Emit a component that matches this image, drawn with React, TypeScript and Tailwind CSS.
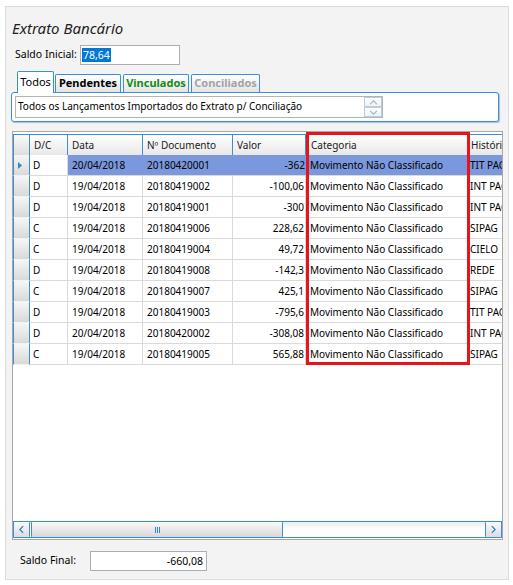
const rows = [
  ['D', '20/04/2018', '20180420001', '-362', 'TIT PAGO'],
  ['D', '19/04/2018', '20180419002', '-100,06', 'INT PAG'],
  ['D', '19/04/2018', '20180419001', '-300', 'INT PAG'],
  ['C', '19/04/2018', '20180419006', '228,62', 'SIPAG'],
  ['C', '19/04/2018', '20180419004', '49,72', 'CIELO'],
  ['D', '19/04/2018', '20180419008', '-142,3', 'REDE'],
  ['C', '19/04/2018', '20180419007', '425,1', 'SIPAG'],
  ['D', '19/04/2018', '20180419003', '-795,6', 'TIT PAGO'],
  ['D', '20/04/2018', '20180420002', '-308,08', 'INT PAG'],
  ['C', '19/04/2018', '20180419005', '565,88', 'SIPAG'],
]

function Chevron({ dir, className }: { dir: 'up' | 'down' | 'left' | 'right'; className?: string }) {
  const pts = {
    up: '1,5 5,1 9,5',
    down: '1,1 5,5 9,1',
    left: '5,1 1,5 5,9',
    right: '1,1 5,5 1,9',
  }[dir]
  const box = dir === 'up' || dir === 'down' ? '0 0 10 6' : '0 0 6 10'
  return (
    <svg viewBox={box} className={className} fill="none" stroke="currentColor" strokeWidth="1.4">
      <polyline points={pts} />
    </svg>
  )
}

export default function App() {
  return (
    <div className="relative w-[513px] h-[585px] bg-white pt-[6px] pl-[5px] font-['Noto_Sans',sans-serif] text-[10px] text-black">
      <div className="w-[504px] h-[574px] border border-[#dcdcdc] bg-[#f3f3f3] flex flex-col">
        <div className="ml-[6px] mt-[10px] h-[22px] leading-[22px] text-[15px] italic text-[#1e1e1e]">
          Extrato Bancário
        </div>

        <div className="mt-[6px] ml-[9px] flex items-center h-[20px] text-[10.5px]">
          <span className="w-[65px]">Saldo Inicial:</span>
          <div className="w-[100px] h-[20px] border border-[#abadb3] bg-white flex items-center pl-[1px]">
            <span className="bg-[#0078d7] text-white px-[1px] leading-[14px]">78,64</span>
          </div>
        </div>

        {/* tabs */}
        <div className="mt-[6px] ml-[11px] h-[22px] flex items-end relative z-10 text-[11px]">
          <div className="w-[37px] h-[22px] border border-b-0 border-[#3c8fd6] rounded-t-[2px] bg-white flex items-center justify-center pb-[1px]">
            Todos
          </div>
          <div className="ml-[1px] w-[66px] h-[18px] mb-[1px] border border-b-0 border-[#3c8fd6] rounded-t-[2px] bg-linear-to-b from-white to-[#e4e4e4] flex items-center justify-center font-bold">
            Pendentes
          </div>
          <div className="ml-[2px] w-[66px] h-[18px] mb-[1px] border border-b-0 border-[#3c8fd6] rounded-t-[2px] bg-linear-to-b from-white to-[#e4e4e4] flex items-center justify-center font-bold text-[#168a16]">
            Vinculados
          </div>
          <div className="ml-[2px] w-[69px] h-[18px] mb-[1px] border border-b-0 border-[#3c8fd6] rounded-t-[2px] bg-linear-to-b from-white to-[#e4e4e4] flex items-center justify-center font-bold text-[#a3a3a3]">
            Conciliados
          </div>
        </div>
        <div className="-mt-[1px] ml-[5px] w-[488px] h-[30px] border border-[#3c8fd6] rounded-[3px] bg-white shadow-[1px_1px_1px_rgba(30,90,150,0.35)]">
          <div className="mt-[3px] ml-[3px] w-[368px] h-[22px] border border-[#b4b4b4] flex">
            <div className="flex-1 pl-[2px] leading-[19px]">
              Todos os Lançamentos Importados do Extrato p/ Conciliação
            </div>
            <div className="w-[18px] flex flex-col">
              <div className="h-[10px] border border-[#b9cde0] bg-linear-to-b from-white to-[#eef2f6] flex items-center justify-center text-[#9bb5cc]">
                <Chevron dir="up" className="w-[9px] h-[5px]" />
              </div>
              <div className="h-[10px] border border-[#b9cde0] bg-linear-to-b from-white to-[#eef2f6] flex items-center justify-center text-[#9bb5cc]">
                <Chevron dir="down" className="w-[9px] h-[5px]" />
              </div>
            </div>
          </div>
        </div>

        {/* grid */}
        <div className="mt-[9px] ml-[6px] w-[491px] h-[409px] border border-[#a7a7a7] bg-white pt-[2px] pb-[1px] flex flex-col overflow-hidden">
          <div className="flex h-[21px] border-t border-[#3c8fd6] text-[#1a1a1a] whitespace-nowrap">
            <div className="w-[17px] shrink-0 border-x border-[#3c8fd6] bg-linear-to-b from-[#fafafa] to-[#dedede]" />
            <div className="w-[38px] shrink-0 border-r border-[#3c8fd6] bg-linear-to-b from-white to-[#e8e8e8] pl-[4px] leading-[20px]">D/C</div>
            <div className="w-[75px] shrink-0 border-r border-[#3c8fd6] bg-linear-to-b from-white to-[#e8e8e8] pl-[4px] leading-[20px]">Data</div>
            <div className="w-[90px] shrink-0 border-r border-[#3c8fd6] bg-linear-to-b from-white to-[#e8e8e8] pl-[4px] leading-[20px]">Nº Documento</div>
            <div className="w-[73px] shrink-0 border-r border-[#3c8fd6] bg-linear-to-b from-white to-[#e8e8e8] pl-[4px] leading-[20px]">Valor</div>
            <div className="w-[162px] shrink-0 border-r border-[#3c8fd6] bg-linear-to-b from-white to-[#e8e8e8] pl-[5px] leading-[20px]">Categoria</div>
            <div className="w-[100px] shrink-0 bg-linear-to-b from-white to-[#e8e8e8] pl-[3px] leading-[20px]">Histórico</div>
          </div>

          {rows.map((r, i) => {
            const sel = i === 0
            const cell = sel ? 'bg-[#7b98dc]' : ''
            return (
              <div key={i} className="flex h-[21px] whitespace-nowrap leading-[20px]">
                <div className="w-[17px] shrink-0 border-x border-[#3c8fd6] border-b border-b-[#f2f2f2] bg-linear-to-b from-[#f6f6f6] to-[#d9d9d9] flex items-center pl-[4px]">
                  {sel && (
                    <svg viewBox="0 0 4 7" className="w-[4px] h-[7px] text-[#2e86d4]" fill="currentColor">
                      <polygon points="0,0 4,3.5 0,7" />
                    </svg>
                  )}
                </div>
                <div className="w-[38px] shrink-0 border-r border-b border-[#dadada] pl-[3px]">{r[0]}</div>
                <div className={`w-[75px] shrink-0 border-b border-[#dadada] pl-[4px] ${sel ? cell : 'border-r'}`}>{r[1]}</div>
                <div className={`w-[90px] shrink-0 border-b border-[#dadada] pl-[4px] ${sel ? cell : 'border-r'}`}>{r[2]}</div>
                <div className={`w-[73px] shrink-0 border-b border-[#dadada] pr-[1px] text-right ${sel ? cell : 'border-r'}`}>{r[3]}</div>
                <div className={`w-[162px] shrink-0 border-b border-[#dadada] pl-[4px] ${sel ? cell : 'border-r'}`}>Movimento Não Classificado</div>
                <div className={`w-[100px] shrink-0 border-b border-[#dadada] pl-[2px] ${cell}`}>{r[4]}</div>
              </div>
            )
          })}

          <div className="flex-1" />

          {/* horizontal scrollbar */}
          <div className="h-[17px] border border-[#3c8fd6] bg-linear-to-b from-[#ececec] via-white to-white flex">
            <div className="w-[16px] border-r border-[#3c8fd6] rounded-[1px] bg-linear-to-b from-[#fafafa] to-[#dcdcdc] flex items-center justify-center text-[#1f7fd0]">
              <Chevron dir="left" className="w-[5px] h-[9px]" />
            </div>
            <div className="ml-[1px] w-[252px] border-x border-[#3c8fd6] rounded-[1px] bg-linear-to-b from-[#fafafa] to-[#d8d8d8] flex items-center justify-center">
              <div className="flex gap-[1px]">
                <div className="w-[1px] h-[6px] bg-[#2e86d4]" />
                <div className="w-[1px] h-[6px] bg-[#2e86d4]" />
                <div className="w-[1px] h-[6px] bg-[#2e86d4]" />
              </div>
            </div>
            <div className="flex-1" />
            <div className="w-[16px] border-l border-[#3c8fd6] rounded-[1px] bg-linear-to-b from-[#fafafa] to-[#dcdcdc] flex items-center justify-center text-[#1f7fd0]">
              <Chevron dir="right" className="w-[5px] h-[9px]" />
            </div>
          </div>
        </div>

        <div className="mt-[11px] ml-[14px] flex items-center h-[20px] text-[10.5px]">
          <span className="w-[70px]">Saldo Final:</span>
          <div className="w-[117px] h-[20px] border border-[#abadb3] bg-white text-right pr-[3px] leading-[18px]">-660,08</div>
        </div>
      </div>

      {/* annotation */}
      <div className="absolute left-[306px] top-[132px] w-[164px] h-[233px] border-[3px] border-[#e8141c]" />
    </div>
  )
}
